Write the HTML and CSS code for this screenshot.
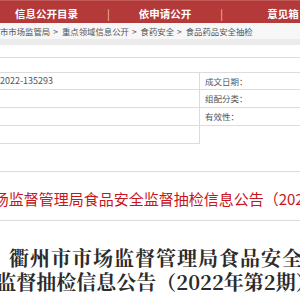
FILE: index.html
```html
<!DOCTYPE html>
<html lang="zh-CN">
<head>
    <meta charset="UTF-8">
    <meta name="viewport" content="width=device-width, initial-scale=1.0">
    <title>食品药品安全抽检</title>
    <link rel="stylesheet" href="styles.css">
</head>
<body>
    <div class="nav">
        <span class="nav-item first">信息公开目录</span>
        <span class="nav-sep">|</span>
        <span class="nav-item">依申请公开</span>
        <span class="nav-sep last">|</span>
        <span class="nav-item">意见箱</span>
    </div>

    <div class="crumbs">
        市市场监管局<span class="arrow">&gt;</span>重点领域信息公开<span class="arrow">&gt;</span>食药安全<span class="arrow">&gt;</span>食品药品安全抽检
    </div>
    <div class="band"></div>

    <div class="meta">
        <div class="meta-index"></div>
        <div class="meta-grid">
            <div class="meta-left">
                <div class="cell">2022-135293</div>
                <div class="cell"></div>
                <div class="cell"></div>
                <div class="cell"></div>
            </div>
            <div class="meta-right">
                <div class="cell">成文日期：</div>
                <div class="cell">组配分类：</div>
                <div class="cell">有效性：</div>
            </div>
        </div>
    </div>

    <div class="doc-head">
        <span class="doc-head-text">衢州市市场监督管理局食品安全监督抽检信息公告（2022年第2期）</span>
    </div>

    <div class="article">
        <h1 class="article-title"><span class="title-line wide">衢州市市场监督管理局食品安全</span><span class="title-line">监督抽检信息公告（2022年第2期）</span></h1>
    </div>
</body>
</html>
```

FILE: styles.css
```css
body {
    margin: 0;
    font-family: "Noto Sans CJK SC", sans-serif;
    background: #fff;
    overflow: hidden;
}
.nav {
    display: flex;
    align-items: center;
    height: 23px;
    padding-top: 3px;
    box-sizing: border-box;
    border-top: 1px solid #c25a5a;
    background-color: #b43a3a;
    color: #fff;
    font-size: 10.5px;
    font-weight: bold;
    white-space: nowrap;
}
.nav-item.first {
    margin-left: 15px;
}
.nav-sep {
    font-weight: normal;
    color: #f0c8c8;
    margin: 0 29px;
}
.nav-sep.last {
    margin-right: 44px;
}
.crumbs {
    height: 16px;
    line-height: 16px;
    background-color: #f7f7f7;
    color: #555;
    font-size: 8.4px;
    white-space: nowrap;
}
.arrow {
    margin: 0 4px 0 3px;
}
.band {
    height: 6px;
    background-color: #ebebeb;
}
.meta {
    margin-top: 12px;
    font-size: 8.5px;
    color: #555;
}
.meta-index {
    height: 14px;
    border-top: 1px solid #dcdcdc;
}
.meta-grid {
    display: grid;
    grid-template-columns: 200px 1fr;
    align-items: start;
}
.meta-left {
    border-right: 1px solid #dcdcdc;
    border-bottom: 1px solid #dcdcdc;
}
.meta-right {
    border-bottom: 1px solid #dcdcdc;
}
.cell {
    height: 17px;
    line-height: 17px;
    border-top: 1px solid #dcdcdc;
    white-space: nowrap;
}
.meta-left .cell:first-child {
    height: 16px;
    line-height: 16px;
    font-size: 9px;
}
.meta-right .cell:first-child {
    height: 16px;
    line-height: 16px;
}
.meta-right .cell {
    padding-left: 5px;
}
.doc-head {
    display: flex;
    justify-content: center;
    margin-top: 27px;
    padding-top: 6px;
    padding-left: 14px;
    height: 42px;
    line-height: 42px;
    border-top: 1px solid #dcdcdc;
    border-bottom: 1px solid #dcdcdc;
    overflow: hidden;
}
.doc-head-text {
    flex: none;
    white-space: nowrap;
    color: #c8161d;
    font-size: 15px;
}
.article {
    display: flex;
    justify-content: center;
    padding-top: 25px;
    padding-left: 12px;
    overflow: hidden;
}
.article-title {
    flex: none;
    margin: 0;
    white-space: nowrap;
    text-align: center;
    font-family: "Noto Serif CJK SC", "Noto Sans CJK SC", serif;
    font-size: 20px;
    line-height: 24px;
    font-weight: bold;
    color: #2b2b2b;
}
.title-line {
    display: block;
}
.title-line.wide {
    letter-spacing: 1px;
}
```
